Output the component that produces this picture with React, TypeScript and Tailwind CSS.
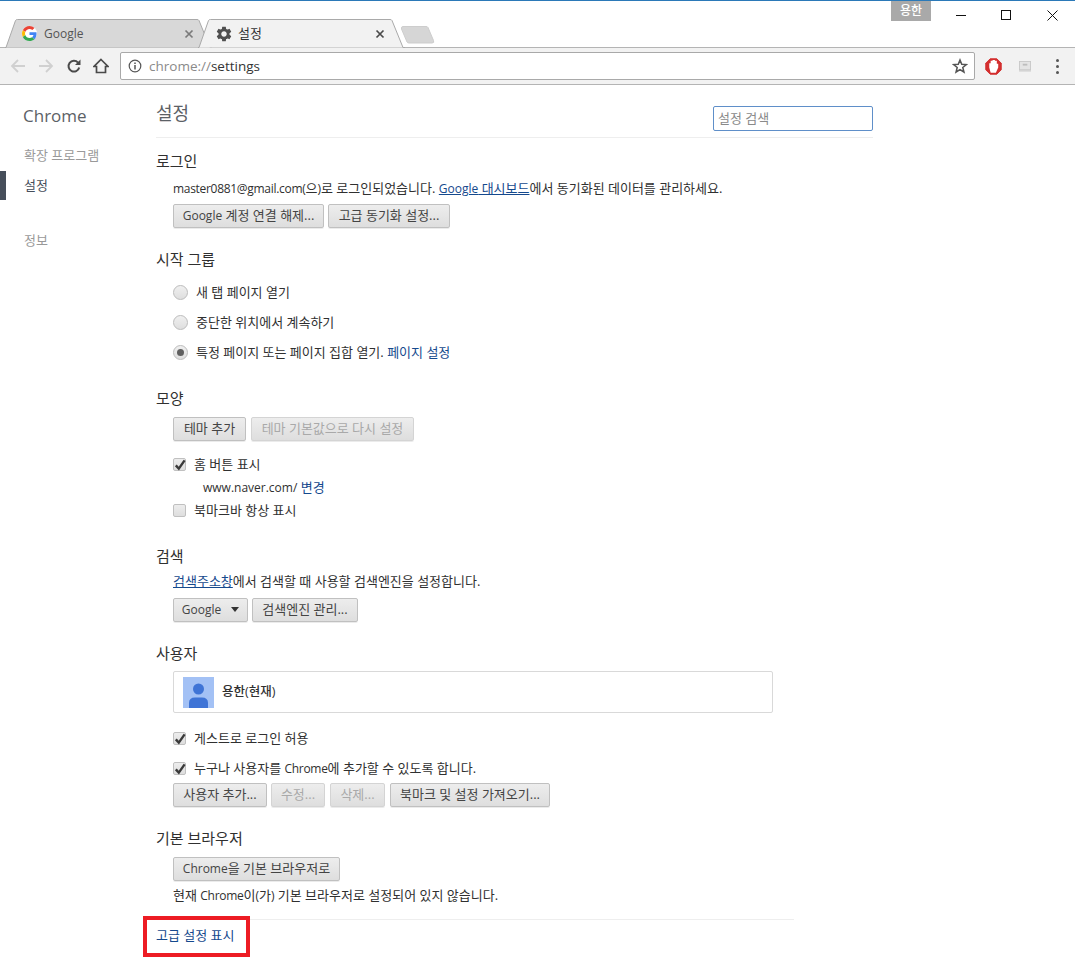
import React from "react";

const linkC = "text-[#15498d]";

function L({ children, cls }: { children: React.ReactNode; cls?: string }) {
  return <span className={`text-[12px] ${cls ?? ""}`}>{children}</span>;
}

function Btn({ w, children, disabled }: { w: string; children: React.ReactNode; disabled?: boolean }) {
  return (
    <button
      className={`${w} h-[24px] shrink-0 rounded-[2px] border border-[#c0c0c0] bg-gradient-to-b from-[#ededed] to-[#dedede] pb-[1px] text-[13px] leading-none whitespace-nowrap shadow-[0_1px_0_rgba(0,0,0,0.08)] flex items-center justify-center ${
        disabled ? "text-[#a9a9a9] border-[#d4d4d4]" : "text-[#444444]"
      }`}
    >
      {children}
    </button>
  );
}

function Heading({ mt, children }: { mt: string; children: React.ReactNode }) {
  return <h3 className={`${mt} h-5 flex items-center text-[15px] text-[#303030] font-normal`}>{children}</h3>;
}

function Check({ checked }: { checked?: boolean }) {
  return (
    <span className="relative w-[13px] h-[13px] shrink-0 rounded-[2px] border border-[#c0c0c0] bg-gradient-to-b from-[#ededed] to-[#dedede]">
      {checked && (
        <svg viewBox="0 0 13 13" className="absolute left-0 top-0 w-[13px] h-[13px] overflow-visible">
          <path d="M1.800 6.400 L4.800 9.600 L10.600 1.400" fill="none" stroke="#3a3a3a" strokeWidth="2.400" />
        </svg>
      )}
    </span>
  );
}

function CheckRow({ mt, checked, children }: { mt: string; checked?: boolean; children: React.ReactNode }) {
  return (
    <div className={`${mt} ml-[17px] h-5 flex items-center gap-[8px] text-[13px] text-[#303030]`}>
      <Check checked={checked} />
      <span className="pt-[1px]">{children}</span>
    </div>
  );
}

function Radio({ checked, children }: { checked?: boolean; children: React.ReactNode }) {
  return (
    <div className="ml-[17px] h-[30px] flex items-center gap-[8px] text-[13px] text-[#303030]">
      <span className="w-[15px] h-[15px] shrink-0 rounded-full border border-[#bcbcbc] bg-gradient-to-b from-[#f0f0f0] to-[#dedede] flex items-center justify-center">
        {checked && <span className="w-[7px] h-[7px] rounded-full bg-[#5f5f5f]" />}
      </span>
      <span className="pt-[1px]">{children}</span>
    </div>
  );
}

function TabShape({ fill, w }: { fill: string; w: number }) {
  return (
    <svg className="absolute left-0 top-0" width={w} height="29" viewBox={`0 0 ${w} 29`}>
      <path
        d={`M0 28.500 L1 28.500 L10.500 1.500 Q11 0.500 12.500 0.500 L${w - 15} 0.500 Q${w - 13.500} 0.500 ${w - 13} 1.500 L${w - 2} 28.500 L${w} 28.500`}
        fill={fill}
        stroke="#a9a9a9"
      />
    </svg>
  );
}

function GLogo() {
  return (
    <svg viewBox="0 0 48 48" className="w-[15px] h-[15px] shrink-0">
      <circle cx="24" cy="24" r="24" fill="#ffffff" />
      <path fill="#EA4335" d="M24 9.5c3.5 0 6.6 1.2 9.1 3.6l6.8-6.8C35.8 2.5 30.4 0 24 0 14.6 0 6.5 5.4 2.6 13.2l7.9 6.2C12.4 13.7 17.7 9.5 24 9.5z" />
      <path fill="#4285F4" d="M46.5 24.5c0-1.6-.1-3.100-.4-4.500H24v9h12.700c-.5 2.900-2.200 5.400-4.700 7l7.700 6c4.500-4.200 6.800-10.300 6.800-17.500z" />
      <path fill="#FBBC05" d="M10.500 28.600c-.5-1.400-.8-3-.8-4.600s.3-3.200.8-4.600l-7.900-6.200C.9 16.500 0 20.100 0 24s.9 7.500 2.600 10.800l7.900-6.200z" />
      <path fill="#34A853" d="M24 48c6.500 0 11.900-2.100 15.900-5.800l-7.700-6c-2.200 1.500-5 2.300-8.200 2.300-6.300 0-11.600-4.200-13.500-9.900l-7.900 6.200C6.500 42.600 14.600 48 24 48z" />
    </svg>
  );
}

function Gear() {
  return (
    <svg viewBox="0 0 24 24" className="w-[16px] h-[16px] shrink-0 scale-[1.15]" fill="#4f4f4f">
      <path d="M19.14 12.94c.04-.3.06-.61.06-.94 0-.32-.02-.64-.07-.94l2.030-1.580c.18-.14.23-.41.12-.610l-1.920-3.320c-.12-.22-.37-.29-.59-.22l-2.390.96c-.5-.38-1.030-.7-1.620-.94l-.36-2.540c-.04-.24-.24-.41-.48-.41h-3.840c-.24 0-.43.17-.47.41l-.36 2.540c-.59.24-1.130.57-1.620.94l-2.390-.96c-.22-.08-.47 0-.59.22L2.740 8.870c-.12.21-.08.47.12.61l2.030 1.580c-.05.3-.09.63-.09.94s.02.64.07.94l-2.030 1.580c-.18.14-.23.41-.12.61l1.920 3.320c.12.22.37.29.59.22l2.390-.96c.5.38 1.030.7 1.620.94l.36 2.540c.05.24.24.41.48.41h3.840c.24 0 .44-.17.47-.41l.36-2.540c.59-.24 1.130-.56 1.620-.94l2.390.96c.22.08.47 0 .59-.22l1.920-3.320c.12-.22.07-.47-.12-.61l-2.010-1.580zM12 15.600c-1.980 0-3.600-1.620-3.600-3.600s1.620-3.600 3.600-3.600 3.600 1.620 3.600 3.600-1.620 3.600-3.600 3.600z" />
    </svg>
  );
}

function TabX({ color }: { color: string }) {
  return (
    <svg viewBox="0 0 10 10" className="w-[10px] h-[10px] shrink-0">
      <path d="M1.500 1.500 L8.500 8.500 M8.500 1.500 L1.500 8.500" stroke={color} strokeWidth="1.700" />
    </svg>
  );
}

function Arrow({ dir, color, cls }: { dir: "l" | "r"; color: string; cls?: string }) {
  return (
    <svg viewBox="0 0 16 16" className={`w-[16px] h-[16px] ${cls ?? ""}`}>
      <path
        d={dir === "l" ? "M15 8 H2 M8 2 L2 8 L8 14" : "M1 8 H14 M8 2 L14 8 L8 14"}
        fill="none"
        stroke={color}
        strokeWidth="1.800"
      />
    </svg>
  );
}

export default function App() {
  return (
    <div className="w-[1075px] h-[977px] overflow-hidden relative bg-white font-['Open_Sans','Noto_Sans_CJK_KR',sans-serif] text-[13px]">
      {/* title bar / tab strip */}
      <div className="h-[47px] border-t border-[#2b79b8] flex">
        <div className="relative z-10 flex items-start pl-[5px] pt-[18px]">
          <div className="relative w-[207px] h-[29px]">
            <TabShape fill="#d8d8d8" w={207} />
            <div className="relative h-full flex items-center pl-[17px] pr-[18px] gap-[7px] text-[12px] text-[#555555]">
              <GLogo />
              <span className="flex-1">Google</span>
              <TabX color="#7a7a7a" />
            </div>
          </div>
          <div className="relative w-[207px] h-[29px] -ml-[14px]">
            <TabShape fill="#f2f2f2" w={207} />
            <div className="relative h-full flex items-center pl-[18px] pr-[20px] gap-[6px] text-[13px] text-[#333333]">
              <Gear />
              <span className="flex-1">설정</span>
              <TabX color="#4a4a4a" />
            </div>
          </div>
          <svg width="36" height="18" viewBox="0 0 36 18" className="-ml-[4px] mt-[7px]">
            <path d="M0.500 2 Q0.500 0.500 2 0.500 L25 0.500 Q26.500 0.500 27 1.500 L32.500 14.500 Q33.500 17 31 17 L8 17 Q6.500 17 6 16 L0.500 3 Z" fill="#d6d6d6" stroke="#cdcdcd" />
          </svg>
        </div>
        <div className="flex-1" />
        <div className="flex items-start">
          <div className="w-[40px] h-[20px] bg-[#a9a9a9] text-white text-[12px] font-medium flex items-center justify-center">용한</div>
          <div className="w-[144px] flex items-start pl-[25px] pt-[9px] gap-[34px]">
            <svg width="11" height="11" viewBox="0 0 11 11"><path d="M0 5.500 H10" stroke="#111" strokeWidth="1" /></svg>
            <svg width="11" height="11" viewBox="0 0 11 11"><rect x="0.500" y="0.500" width="9" height="9" fill="none" stroke="#111" /></svg>
            <svg width="11" height="11" viewBox="0 0 11 11" className="ml-[1px]"><path d="M0.500 0.500 L10.500 10.500 M10.500 0.500 L0.500 10.500" stroke="#111" strokeWidth="1" /></svg>
          </div>
        </div>
      </div>

      {/* toolbar */}
      <div className="h-[38px] bg-[#f2f2f2] border-y border-[#b4b4b4] flex items-center">
        <div className="w-[120px] flex items-center pl-[10px] shrink-0">
          <Arrow dir="l" color="#d0d0d0" />
          <Arrow dir="r" color="#d0d0d0" cls="ml-[12px]" />
          <svg viewBox="0 0 16 16" className="w-[16px] h-[16px] ml-[12px]">
            <path d="M13.200 9.500 A5.400 5.400 0 1 1 12 4.600" fill="none" stroke="#4a4a4a" strokeWidth="2" />
            <path d="M14.500 1.500 V7 H9 Z" fill="#4a4a4a" />
          </svg>
          <svg viewBox="0 0 16 16" className="w-[16px] h-[16px] ml-[11px]">
            <path d="M8 1.500 L15 8.500 H12.500 V14.500 H3.500 V8.500 H1 Z" fill="none" stroke="#4a4a4a" strokeWidth="1.700" />
          </svg>
        </div>
        <div className="w-[855px] h-[28px] shrink-0 bg-white border border-[#a9a9a9] rounded-[2px] flex items-center pl-[7px] pr-[6px] gap-[7px]">
          <svg viewBox="0 0 14 14" className="w-[14px] h-[14px] shrink-0">
            <circle cx="7" cy="7" r="5.800" fill="none" stroke="#555" strokeWidth="1.200" />
            <path d="M7 6 V10.500 M7 3.500 V5" stroke="#555" strokeWidth="1.500" />
          </svg>
          <span className="flex-1 text-[13.500px] text-[#8a8a8a]">
            chrome://<span className="text-[#333333]">settings</span>
          </span>
          <svg viewBox="0 0 24 24" className="w-[16px] h-[16px] shrink-0">
            <path d="M12 3 L14.600 9.300 L21.500 9.800 L16.200 14.200 L17.900 21 L12 17.300 L6.100 21 L7.800 14.200 L2.500 9.800 L9.400 9.300 Z" fill="none" stroke="#555" strokeWidth="2.300" />
          </svg>
        </div>
        <div className="flex-1 flex items-center pl-[10px]">
          <svg viewBox="0 0 18 18" className="w-[17px] h-[17px] shrink-0">
            <path d="M5.500 0.800 H12.500 L17.200 5.500 V12.500 L12.500 17.200 H5.500 L0.800 12.500 V5.500 Z" fill="#d32f2f" stroke="#d32f2f" strokeLinejoin="round" />
            <path d="M6 15.500 L4.500 10 V5.500 H6 V3 H8 V2 H10.500 V3 H12.500 V6 H14 V10 L11.500 15.500 Z" fill="#ffffff" />
          </svg>
          <svg viewBox="0 0 14 12" className="w-[13px] h-[11px] ml-[17px] shrink-0">
            <rect x="0.500" y="0.500" width="12" height="9" fill="#e4e4e4" stroke="#c8c8c8" />
            <rect x="4" y="3" width="5" height="2" fill="#bdbdbd" />
            <rect x="0" y="10" width="13" height="1.500" fill="#cfcfcf" />
          </svg>
          <div className="ml-[24px] flex flex-col gap-[3px]">
            <span className="w-[3px] h-[3px] rounded-full bg-[#555555]" />
            <span className="w-[3px] h-[3px] rounded-full bg-[#555555]" />
            <span className="w-[3px] h-[3px] rounded-full bg-[#555555]" />
          </div>
        </div>
      </div>

      <div className="flex">
        {/* sidebar */}
        <aside className="w-[156px] shrink-0">
          <div className="pl-[23px] pt-[19px] h-[52px] text-[17px] leading-[24px] text-[#5c6166]">Chrome</div>
          <div className="mt-[9px] pl-[24px] h-5 flex items-center text-[#999999]">확장 프로그램</div>
          <div className="mt-[5px] h-[29px] flex items-center">
            <span className="w-[6px] h-[29px] bg-[#464e5a]" />
            <span className="pl-[18px] text-[#464e5a]">설정</span>
          </div>
          <div className="mt-[31px] pl-[24px] h-5 flex items-center text-[#999999]">정보</div>
        </aside>

        {/* main */}
        <main className="w-[638px]">
          <header className="relative h-[53px] w-[717px] border-b border-[#eeeeee] flex items-start justify-between">
            <h1 className="mt-[16px] text-[18px] leading-[24px] text-[#5c6166] font-normal">설정</h1>
            <input
              placeholder="설정 검색"
              readOnly
              className="mt-[21px] w-[160px] h-[25px] border border-[#5f8fc9] rounded-[2px] px-[4px] pb-[1px] text-[13px] outline-none placeholder:text-[#8a8a8a]"
            />
          </header>

          <Heading mt="mt-[13px]">로그인</Heading>
          <div className="mt-[7px] ml-[17px] h-5 pt-[1px] flex items-center whitespace-nowrap text-[#303030]">
            <span>
              <L cls="tracking-[-0.3px]">master0881@gmail.com(</L>으<L>)</L>로 로그인되었습니다.{" "}
              <span className={`${linkC} underline`}><L>Google</L> 대시보드</span>에서 동기화된 데이터를 관리하세요.
            </span>
          </div>
          <div className="mt-[6px] ml-[17px] flex gap-[4px]">
            <Btn w="w-[151px]"><L>Google</L>&nbsp;계정 연결 해제...</Btn>
            <Btn w="w-[122px]">고급 동기화 설정...</Btn>
          </div>

          <Heading mt="mt-[21px]">시작 그룹</Heading>
          <div className="mt-[8px]">
            <Radio>새 탭 페이지 열기</Radio>
            <Radio>중단한 위치에서 계속하기</Radio>
            <Radio checked>
              특정 페이지 또는 페이지 집합 열기. <span className={linkC}>페이지 설정</span>
            </Radio>
          </div>

          <Heading mt="mt-[21px]">모양</Heading>
          <div className="mt-[9px] ml-[17px] flex gap-[5px]">
            <Btn w="w-[73px]">테마 추가</Btn>
            <Btn w="w-[163px]" disabled>테마 기본값으로 다시 설정</Btn>
          </div>
          <CheckRow mt="mt-[13px]" checked>홈 버튼 표시</CheckRow>
          <div className="mt-[3px] ml-[47px] h-5 pt-[1px] flex items-center text-[#303030]">
            <span>
              <L>www.naver.com/</L> <span className={linkC}>변경</span>
            </span>
          </div>
          <CheckRow mt="mt-[3px]">북마크바 항상 표시</CheckRow>

          <Heading mt="mt-[26px]">검색</Heading>
          <div className="mt-[5px] ml-[17px] h-5 pt-[1px] flex items-center text-[#303030]">
            <span>
              <span className={`${linkC} underline`}>검색주소창</span>에서 검색할 때 사용할 검색엔진을 설정합니다.
            </span>
          </div>
          <div className="mt-[7px] ml-[17px] flex gap-[4px]">
            <Btn w="w-[75px]">
              <span className="flex items-center gap-[10px]">
                <L>Google</L>
                <span className="w-0 h-0 border-x-[4.500px] border-x-transparent border-t-[5px] border-t-[#333333]" />
              </span>
            </Btn>
            <Btn w="w-[106px]">검색엔진 관리...</Btn>
          </div>

          <Heading mt="mt-[21px]">사용자</Heading>
          <div className="mt-[8px] ml-[17px] w-[600px] h-[42px] border border-[#d9d9d9] rounded-[2px] flex items-center pl-[9px] gap-[8px]">
            <svg viewBox="0 0 31 31" className="w-[31px] h-[31px] shrink-0">
              <rect width="31" height="31" fill="#a3c1f5" />
              <circle cx="15.500" cy="12" r="5.500" fill="#3f74d6" />
              <path d="M6 31 V26 Q6 20.500 12 20.500 H19 Q25 20.500 25 26 V31 Z" fill="#3f74d6" />
            </svg>
            <span className="font-medium text-[12.500px] text-[#303030]">용한(현재)</span>
          </div>
          <CheckRow mt="mt-[15px]" checked>게스트로 로그인 허용</CheckRow>
          <CheckRow mt="mt-[10px]" checked>누구나 사용자를 <L cls="tracking-[-0.3px]">Chrome</L>에 추가할 수 있도록 합니다.</CheckRow>
          <div className="mt-[5px] ml-[17px] flex gap-[4px]">
            <Btn w="w-[94px]">사용자 추가...</Btn>
            <Btn w="w-[54px]" disabled>수정...</Btn>
            <Btn w="w-[55px] ml-[1px]" disabled>삭제...</Btn>
            <Btn w="w-[160px] ml-[1px]">북마크 및 설정 가져오기...</Btn>
          </div>

          <Heading mt="mt-[21px]">기본 브라우저</Heading>
          <div className="mt-[9px] ml-[17px]">
            <Btn w="w-[167px]"><L>Chrome</L>을 기본 브라우저로</Btn>
          </div>
          <div className="mt-[4px] ml-[17px] h-5 pt-[1px] flex items-center text-[#303030]">
            <span>
              현재 <L cls="tracking-[-0.3px]">Chrome</L>이<L>(</L>가<L>)</L> 기본 브라우저로 설정되어 있지 않습니다.
            </span>
          </div>
          <div className="mt-[14px] border-t border-[#eeeeee]" />
          <div className={`mt-[6px] h-5 flex items-center ${linkC}`}>고급 설정 표시</div>
        </main>
      </div>

      {/* annotation */}
      <div className="absolute left-[143px] top-[916px] w-[107px] h-[41px] border-[4px] border-[#ed1c24]" />
    </div>
  );
}
